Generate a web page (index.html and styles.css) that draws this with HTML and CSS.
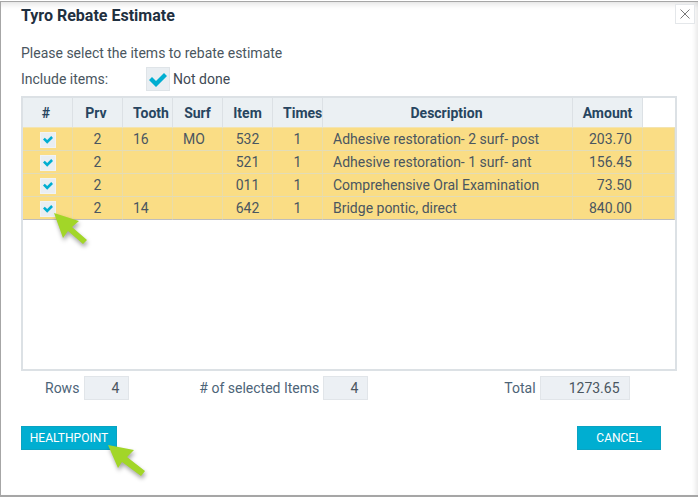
FILE: index.html
```html
<!DOCTYPE html>
<html lang="en">
<head>
    <meta charset="UTF-8">
    <title>Tyro Rebate Estimate</title>
    <link rel="stylesheet" href="styles.css">
</head>
<body>
    <div class="dialog">
        <button class="close-button" aria-label="Close">
            <svg width="10" height="10" viewBox="0 0 10 10"><path d="M.5.5l9 9M9.5.5l-9 9" stroke="#555" stroke-width=".8" fill="none"/></svg>
        </button>
        <h1>Tyro Rebate Estimate</h1>
        <p class="hint">Please select the items to rebate estimate</p>
        <div class="include-row">
            <span class="include-label">Include items:</span>
            <span class="check check-large">
                <svg width="20" height="15" viewBox="0 0 20 15"><path d="M1 8l3-3 4 4 8-8 3 3-11 11z" fill="#00aed1"/></svg>
            </span>
            <span class="include-text">Not done</span>
        </div>

        <div class="grid-box">
            <table class="items-table">
                <colgroup>
                    <col class="w50"><col class="w50"><col class="w50"><col class="w50"><col class="w50"><col class="w50"><col class="w250"><col class="w70"><col>
                </colgroup>
                <thead>
                    <tr>
                        <th class="nudge">#</th><th class="nudge">Prv</th><th>Tooth</th><th>Surf</th><th>Item</th><th>Times</th><th class="th-desc">Description</th><th class="th-amount">Amount</th><th class="blank"></th>
                    </tr>
                </thead>
                <tbody>
                    <tr>
                        <td class="c"><span class="check"><svg width="12" height="9" viewBox="0 0 12 9"><path d="M1 4.500l1.800-1.800 2.400 2.400 4-4 1.800 1.800-5.800 5.800z" fill="#00aed1"/></svg></span></td>
                        <td class="c">2</td><td class="pad">16</td><td class="pad">MO</td><td class="c">532</td><td class="c">1</td><td class="pad">Adhesive restoration- 2 surf- post</td><td class="amount">203.70</td><td></td>
                    </tr>
                    <tr>
                        <td class="c"><span class="check"><svg width="12" height="9" viewBox="0 0 12 9"><path d="M1 4.500l1.800-1.800 2.400 2.400 4-4 1.800 1.800-5.800 5.800z" fill="#00aed1"/></svg></span></td>
                        <td class="c">2</td><td class="pad"></td><td class="pad"></td><td class="c">521</td><td class="c">1</td><td class="pad">Adhesive restoration- 1 surf- ant</td><td class="amount">156.45</td><td></td>
                    </tr>
                    <tr>
                        <td class="c"><span class="check"><svg width="12" height="9" viewBox="0 0 12 9"><path d="M1 4.500l1.800-1.800 2.400 2.400 4-4 1.800 1.800-5.800 5.800z" fill="#00aed1"/></svg></span></td>
                        <td class="c">2</td><td class="pad"></td><td class="pad"></td><td class="c">011</td><td class="c">1</td><td class="pad">Comprehensive Oral Examination</td><td class="amount">73.50</td><td></td>
                    </tr>
                    <tr>
                        <td class="c"><span class="check"><svg width="12" height="9" viewBox="0 0 12 9"><path d="M1 4.500l1.800-1.800 2.400 2.400 4-4 1.800 1.800-5.800 5.800z" fill="#00aed1"/></svg></span></td>
                        <td class="c">2</td><td class="pad">14</td><td class="pad"></td><td class="c">642</td><td class="c">1</td><td class="pad">Bridge pontic, direct</td><td class="amount">840.00</td><td></td>
                    </tr>
                </tbody>
            </table>
        </div>

        <div class="totals">
            <div class="total-item rows"><span>Rows</span><span class="value value-rows">4</span></div>
            <div class="total-item selected"><span># of selected Items</span><span class="value value-selected">4</span></div>
            <div class="total-item sum"><span>Total</span><span class="value value-total">1273.65</span></div>
        </div>

        <div class="actions">
            <button class="btn btn-health">HEALTHPOINT</button>
            <button class="btn btn-cancel">CANCEL</button>
        </div>

        <!-- green callout arrows -->
        <svg class="arrow arrow-row" width="46" height="46" viewBox="0 0 46 46"><path d="M2 2L27 10 20 16 35 29 31 33 16 20 11 27Z" fill="#a2d628"/></svg>
        <svg class="arrow arrow-btn" width="46" height="46" viewBox="0 0 46 46"><path d="M2 2L28 7 21 14 39 28 35 33 16 19 12 25Z" fill="#a2d628"/></svg>
    </div>
</body>
</html>
```

FILE: styles.css
```css
:root {
    --cyan: #00aed1;
    --line: #dce1e5;
    --head-bg: #ebf0f3;
    --row-bg: #fadd85;
    --text: #4a5660;
    --head-text: #274560;
}

* {
    box-sizing: border-box;
}

body {
    margin: 0;
    background: #fff;
    font-family: Roboto, "Liberation Sans", sans-serif;
    font-size: 14px;
    color: var(--text);
}

.dialog {
    position: relative;
    width: 698px;
    height: 496px;
    margin-top: 1px;
    padding: 5px 0 0 21px;
    overflow: hidden;
    background: #fff;
    border-top: 1px solid #a6a6a6;
    border-left: 1px solid #a6a6a6;
    border-bottom: 2px solid #a6a6a6;
    box-shadow: inset 0 8px 6px -6px rgba(0,0,0,0.12), inset -5px 0 5px -3px rgba(0,0,0,0.1);
}

h1 {
    margin: 0 0 0 -1px;
    font-size: 16px;
    line-height: 17px;
    font-weight: 700;
    color: #1f3040;
}

.close-button {
    position: absolute;
    top: 2px;
    right: 3px;
    width: 20px;
    height: 20px;
    padding: 0;
    display: flex;
    align-items: center;
    justify-content: center;
    background: #fff;
    border: 1px solid #e4e7ea;
}

.hint {
    margin: 19px 0 0 -1px;
    line-height: 20px;
}

.include-row {
    display: flex;
    align-items: center;
    height: 24px;
    margin: 4px 0 0 -1px;
}

.include-label {
    width: 125px;
}

.check {
    display: inline-flex;
    align-items: center;
    justify-content: center;
    width: 16px;
    height: 16px;
    margin-left: 1px;
    background: #e9eef2;
    border: 1px solid #f0f3f5;
    vertical-align: middle;
}

.check-large {
    width: 24px;
    height: 24px;
    margin-left: 0;
    border: 1px solid #dfe4e8;
}

.include-text {
    margin-left: 3px;
    color: #3f4a54;
}

.grid-box {
    width: 656px;
    height: 275px;
    margin: 5px 0 0 -1px;
    background: #fff;
    border: 2px solid var(--line);
}

.items-table {
    width: 652px;
    table-layout: fixed;
    border-collapse: separate;
    border-spacing: 0;
}

.w50 { width: 50px; }
.w250 { width: 250px; }
.w70 { width: 70px; }

.items-table th {
    height: 30px;
    padding: 0 10px;
    background: var(--head-bg);
    color: var(--head-text);
    font-weight: 700;
    font-size: 14px;
    border-right: 1px solid var(--line);
    border-bottom: 1px solid #f3e4b0;
    white-space: nowrap;
}

.items-table th.nudge {
    padding-right: 13px;
}

.items-table th.th-desc {
    padding-right: 12px;
}

.items-table th.th-amount {
    padding: 0;
}

.items-table th.blank {
    background: #fff;
    border-right: 0;
}

.items-table td {
    height: 23px;
    padding: 0;
    background: var(--row-bg);
    border-right: 1px solid #e9dca8;
    border-bottom: 1px solid #e2dcb8;
    white-space: nowrap;
}

.items-table td.c {
    text-align: center;
}

.items-table td.pad {
    padding-left: 10px;
}

.items-table td.amount {
    padding-right: 10px;
    text-align: right;
}

.items-table tr:last-child td {
    border-bottom: 1px solid #bdbdbd;
}

.totals {
    display: flex;
    align-items: center;
    height: 24px;
    margin-top: 5px;
}

.total-item {
    display: flex;
    align-items: center;
    gap: 5px;
    color: #4d6478;
}

.rows {
    margin-left: 23px;
}

.selected {
    margin-left: 70px;
    gap: 4px;
}

.sum {
    margin-left: 136px;
    gap: 4px;
}

.value {
    height: 24px;
    padding-right: 9px;
    line-height: 22px;
    text-align: right;
    background: #ecf0f4;
    border: 1px solid #e1e5e9;
    color: #4a5660;
}

.value-rows { width: 45px; }
.value-selected { width: 45px; }
.value-total { width: 90px; }

.actions {
    display: flex;
    justify-content: space-between;
    width: 640px;
    margin: 26px 0 0 -1px;
}

.btn {
    height: 24px;
    padding: 0;
    background: var(--cyan);
    border: 1px solid #0aa3c2;
    color: #fff;
    font-family: inherit;
    font-size: 12px;
    font-weight: 400;
}

.btn-health { width: 96px; }
.btn-cancel { width: 84px; }

.arrow {
    position: absolute;
    filter: drop-shadow(1px 3px 2px rgba(0,0,0,0.35));
}

.arrow-row {
    left: 51px;
    top: 209px;
}

.arrow-btn {
    left: 105px;
    top: 441px;
}
```
